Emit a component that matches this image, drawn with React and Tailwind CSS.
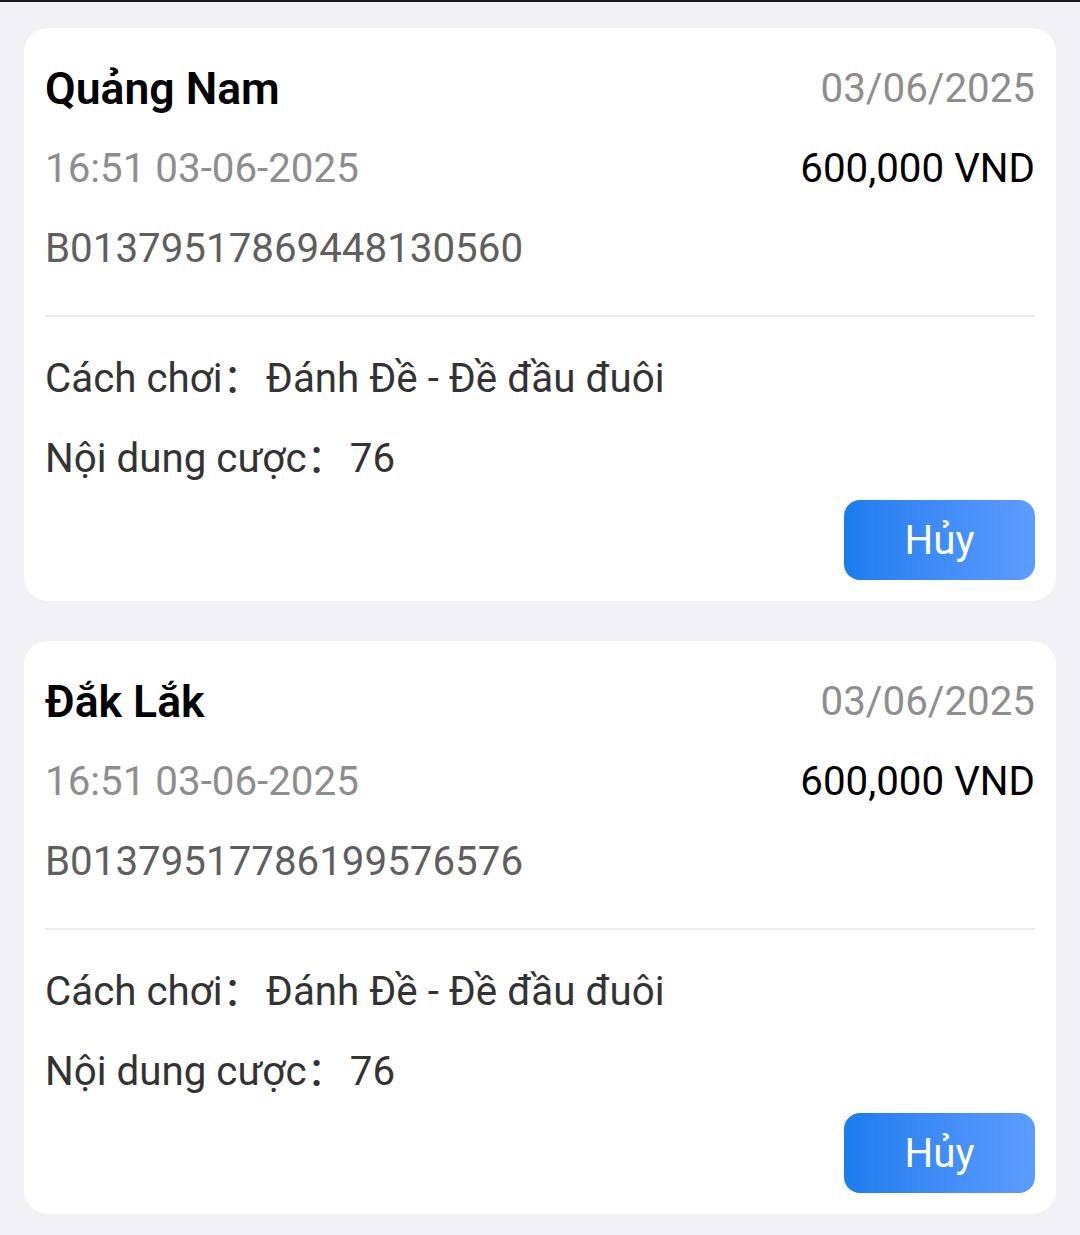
import React from 'react';

const bets = [
  {
    region: 'Quảng Nam',
    drawDate: '03/06/2025',
    time: '16:51 03-06-2025',
    amount: '600,000 VND',
    code: 'B01379517869448130560',
    method: 'Đánh Đề - Đề đầu đuôi',
    content: '76',
  },
  {
    region: 'Đắk Lắk',
    drawDate: '03/06/2025',
    time: '16:51 03-06-2025',
    amount: '600,000 VND',
    code: 'B01379517786199576576',
    method: 'Đánh Đề - Đề đầu đuôi',
    content: '76',
  },
];

const BetCard = ({ bet }) => (
  <div className="bg-white rounded-[24px] px-[21px] pt-5 pb-[21px] text-[40.3px]">
    <div className="flex justify-between items-center h-[80px] pt-[3px]">
      <span className="text-[44.5px] font-semibold text-black">{bet.region}</span>
      <span className="text-[#8e8e8e]">{bet.drawDate}</span>
    </div>
    <div className="flex justify-between items-center h-[80px] pt-[3px]">
      <span className="text-[#8e8e8e]">{bet.time}</span>
      <span className="text-black">{bet.amount}</span>
    </div>
    <div className="flex items-center h-[80px] pt-[3px]">
      <span className="text-[#5f5f5f]">{bet.code}</span>
    </div>

    <div className="mt-[27px] mb-[21px] h-[2px] bg-[#ececec]" />

    <div className="flex items-center h-[80px] pt-[3px] text-[#333]">
      Cách chơi：<span className="ml-[3px]">{bet.method}</span>
    </div>
    <div className="flex items-center h-[80px] pt-[3px] text-[#333]">
      Nội dung cược：<span className="ml-[3px]">{bet.content}</span>
    </div>

    <div className="flex justify-end mt-[2px]">
      <button className="w-[191px] h-[80px] pt-[2px] rounded-[16px] bg-linear-to-r from-[#1a7cef] to-[#5c9cff] text-white leading-none">
        Hủy
      </button>
    </div>
  </div>
);

const App = () => {
  return (
    <div
      className="min-h-[1235px] bg-[#f2f2f6] border-t-2 border-[#1a1a1a] px-6 pt-[26px] pb-5 flex flex-col gap-10"
      style={{ fontFamily: 'Roboto, "Noto Sans CJK SC", sans-serif' }}
    >
      {bets.map((bet) => (
        <BetCard key={bet.code} bet={bet} />
      ))}
    </div>
  );
};

export default App;
